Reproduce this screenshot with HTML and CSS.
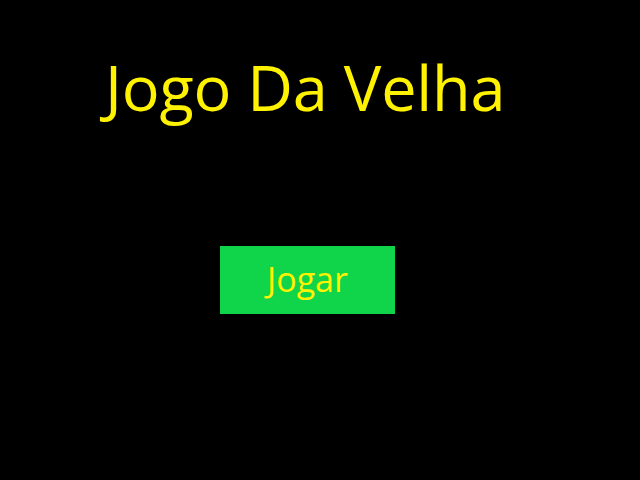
FILE: index.html
```html
<!DOCTYPE html>
<html lang="pt">
<head>
<meta charset="utf-8">
<title>Jogo Da Velha</title>
<link rel="stylesheet" href="styles.css">
</head>
<body>
<main class="screen">
  <h1 class="title">Jogo Da Velha</h1>
  <button class="play">Jogar</button>
</main>
</body>
</html>
```

FILE: styles.css
```css
html, body {
  margin: 0;
  padding: 0;
  background: #000;
  width: 640px;
  height: 480px;
  overflow: hidden;
}
.screen {
  display: flex;
  flex-direction: column;
  font-family: "Open Sans", "Noto Sans", sans-serif;
  color: #fff200;
}
.title {
  margin: 43px 0 0 105px;
  font-size: 63px;
  font-weight: 400;
  line-height: 87px;
  letter-spacing: -0.2px;
}
.play {
  margin: 116px 0 0 220px;
  width: 175px;
  height: 68px;
  border: none;
  padding: 0 0 3px;
  background: #10d54a;
  color: #fff200;
  font-family: "Open Sans", "Noto Sans", sans-serif;
  font-size: 34px;
  line-height: 1;
}
```
